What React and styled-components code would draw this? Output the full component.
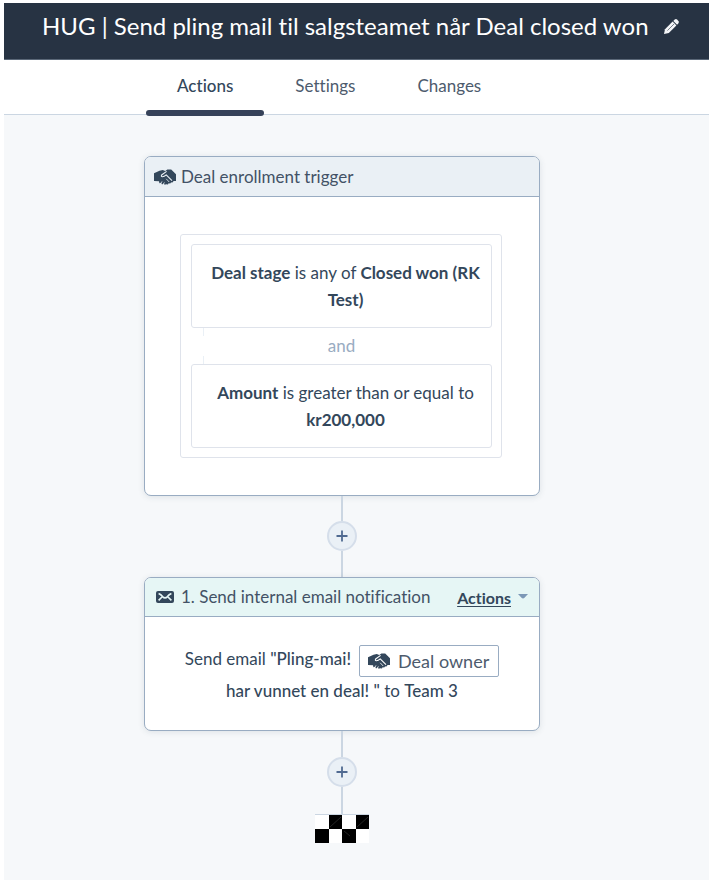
import React from "react";
import styled, { createGlobalStyle } from "styled-components";

const Global = createGlobalStyle`
  * { box-sizing: border-box; }
  body {
    margin: 0;
    background: #fff;
    color: #33475b;
    font-family: Lato, "Liberation Sans", sans-serif;
    font-size: 17px;
    font-variant-ligatures: none;
  }
  button { font: inherit; color: inherit; cursor: pointer; }
`;

const Page = styled.div`
  display: flex;
  flex-direction: column;
  min-height: 100vh;
  padding: 3px 1px 7px 4px;
`;

const Header = styled.header`
  display: flex;
  align-items: flex-start;
  gap: 15px;
  height: 57px;
  padding: 7px 24px 0 38px;
  background: #273343;
  border-bottom: 1px solid #5b6878;
`;

const Title = styled.h1`
  margin: 0;
  color: #fff;
  font-size: 24px;
  font-weight: 400;
  line-height: 32px;
  white-space: nowrap;
`;

const IconButton = styled.button`
  display: flex;
  align-items: center;
  height: 32px;
  padding: 0;
  border: 0;
  background: none;
`;

const Tabs = styled.nav`
  display: flex;
  height: 55px;
  padding-left: 142px;
  border-bottom: 1px solid #cbd6e2;
`;

const Tab = styled.button`
  position: relative;
  padding: 0 31px 4px;
  border: 0;
  background: none;
  color: ${(p) => (p.$active ? "#33475b" : "#4d5b6d")};
  font-weight: ${(p) => (p.$active ? 500 : 400)};

  &::after {
    content: "";
    display: ${(p) => (p.$active ? "block" : "none")};
    position: absolute;
    left: 0;
    right: 0;
    bottom: -2px;
    height: 6px;
    border-radius: 3px;
    background: #364259;
  }
`;

const Canvas = styled.main`
  display: flex;
  flex: 1;
  flex-direction: column;
  align-items: center;
  padding: 41px 29px 32px 0;
  background: #f6f8fa;
`;

const Card = styled.section`
  width: 100%;
  max-width: 396px;
  overflow: hidden;
  border: 1px solid #99acc2;
  border-radius: 7px;
  background: #fff;
  box-shadow: 0 1px 6px rgba(45, 62, 80, 0.12);
`;

const CardHeader = styled.header`
  display: flex;
  align-items: center;
  height: ${(p) => (p.$tone === "action" ? 39 : 40)}px;
  gap: 5px;
  padding: 0 11px 0 9px;
  border-bottom: 1px solid #99acc2;
  background: ${(p) => (p.$tone === "action" ? "#e6f6f5" : "#eaf0f5")};
`;

const IconSlot = styled.span`
  display: flex;
  justify-content: center;
  width: 22px;
`;

const CardTitle = styled.h2`
  flex: 1;
  margin: 0;
  padding-bottom: 1px;
  color: #435266;
  font-size: 17px;
  font-weight: 400;
  white-space: nowrap;
`;

const MenuButton = styled.button`
  display: flex;
  align-items: center;
  gap: 7px;
  padding: 0;
  border: 0;
  background: none;
  font-size: 16px;
  font-weight: 700;

  span {
    text-decoration: underline;
    text-underline-offset: 2px;
  }
`;

const TriggerBody = styled.div`
  padding: 37px 37px 37px 35px;
`;

const FilterGroup = styled.div`
  padding: 9px 9px 9px 10px;
  border: 1px solid #dfe3eb;
  border-radius: 3px;
`;

const Condition = styled.p`
  margin: 0;
  padding: 14px 8px 14px 16px;
  border: 1px solid #dfe3eb;
  border-radius: 3px;
  line-height: 27px;
  text-align: center;
`;

const Joiner = styled.div`
  display: flex;
  flex-direction: column;
  justify-content: space-between;
  height: 36px;
  color: #99acc2;
  line-height: 20px;
  text-align: center;

  &::before,
  &::after {
    content: "";
    width: 1px;
    height: 8px;
    margin-left: 12px;
    background: #eaf0f6;
  }
`;

const Line = styled.div`
  width: 2px;
  height: ${(p) => p.$length}px;
  background: #cbd6e2;
`;

const AddButton = styled.button`
  display: flex;
  align-items: center;
  justify-content: center;
  width: 30px;
  height: 30px;
  padding: 0;
  border: 2px solid #d5deea;
  border-radius: 50%;
  background: #eaf0f6;
`;

const ActionBody = styled.div`
  display: flex;
  flex-direction: column;
  align-items: center;
  padding: 28px 20px 26px;
  line-height: 27px;
`;

const MessageLine = styled.p`
  display: flex;
  align-items: flex-start;
  gap: 8px;
  margin: 0;
  white-space: nowrap;
`;

const Medium = styled.span`
  font-weight: 500;
`;

const Token = styled.span`
  display: flex;
  align-items: center;
  gap: 8px;
  height: 32px;
  padding: 0 9px 0 8px;
  border: 1px solid #99acc2;
  border-radius: 2px;
  color: #4d5b6d;
  font-size: 18px;
`;

function PencilIcon() {
  return (
    <svg width="15" height="15" viewBox="0 0 15 15" aria-hidden="true">
      <path d="M0 15 1 10.2 8.6 2.6 12.4 6.4 4.8 14Z" fill="#f3f5f7" />
      <path d="M9.3 1.9 10.7.6Q12-.4 13.1.6L14.4 1.9Q15.4 3 14.4 4.3L13.1 5.7Z" fill="#f3f5f7" />
      <path d="M3.4 11.6 10 5" stroke="#273343" strokeWidth=".6" />
    </svg>
  );
}

function HandshakeIcon({ gap = "#eaf0f5" }) {
  return (
    <svg width="22" height="16" viewBox="0 0 22 16" aria-hidden="true">
      <path
        d="M0 4.2 5.5 1.8 8.8 1 11.2 2 13.4.6 17.2.6 22 5.2V12L19.4 12 19 13.2 17 13.4 16.2 14.6 14.6 14.2 14 15.6 12.2 15.2 10.6 15.8 9.8 14.6 8 15.4 7.2 13.8 5.4 14.2 5 12.2 0 12Z"
        fill="#33475b"
      />
      <path
        d="M12.6 2.4 7.6 6Q6.8 7.6 8.4 7.8 10.2 7.6 12.2 5.8L18 11.6"
        fill="none"
        stroke={gap}
        strokeWidth="1.1"
        strokeLinejoin="round"
      />
      <path d="M6.8 14.4 8 12.4M9.2 15.6 10.4 13.4M12.2 9.8 15.2 13" stroke={gap} strokeWidth=".8" />
    </svg>
  );
}

function EnvelopeIcon() {
  return (
    <svg width="18" height="12" viewBox="0 0 18 12" aria-hidden="true">
      <rect width="18" height="12" rx="2" fill="#33475b" />
      <path
        d="M2.6 2.6Q5 3.6 6.6 5.6 9 8.2 11.4 5.6 13 3.6 15.4 2.6M2.6 9.4 6 6M15.4 9.4 12 6"
        fill="none"
        stroke="#e6f6f5"
        strokeWidth="1.6"
      />
    </svg>
  );
}

function CaretIcon() {
  return (
    <svg width="10" height="6" viewBox="0 0 10 6" aria-hidden="true">
      <path d="M0 0H10L6.5 3.8Q5 5.2 3.5 3.8Z" fill="#7c98b6" />
    </svg>
  );
}

function PlusIcon() {
  return (
    <svg width="12" height="12" viewBox="0 0 12 12" aria-hidden="true">
      <path d="M6 .5V11.5M.5 6H11.5" stroke="#506a91" strokeWidth="1.8" />
    </svg>
  );
}

function FinishFlag() {
  return (
    <svg width="54" height="29" viewBox="0 0 54 29" role="img" aria-label="End of workflow">
      <rect width="54" height="29" fill="#fff" />
      <path d="M0 .5H54" stroke="#cbd6e2" />
      <path d="M14 1H27V15H14ZM41 1H54V15H41ZM0 15H14V29H0ZM27 15H41V29H27Z" fill="#000" />
      <path d="M15 13 26 3M42 13 53 3M29 17 35 22" stroke="#333" strokeWidth=".7" />
    </svg>
  );
}

function Connector({ before, after }) {
  return (
    <>
      <Line $length={before} />
      <AddButton type="button" aria-label="Add action">
        <PlusIcon />
      </AddButton>
      <Line $length={after} />
    </>
  );
}

const tabs = ["Actions", "Settings", "Changes"];

export default function App() {
  const [active, setActive] = React.useState("Actions");
  return (
    <Page>
      <Global />
      <Header>
        <Title>HUG | Send pling mail til salgsteamet når Deal closed won</Title>
        <IconButton type="button" aria-label="Edit name">
          <PencilIcon />
        </IconButton>
      </Header>
      <Tabs>
        {tabs.map((name) => (
          <Tab key={name} type="button" $active={name === active} onClick={() => setActive(name)}>
            {name}
          </Tab>
        ))}
      </Tabs>
      <Canvas>
        <Card>
          <CardHeader>
            <IconSlot><HandshakeIcon /></IconSlot>
            <CardTitle>Deal enrollment trigger</CardTitle>
          </CardHeader>
          <TriggerBody>
            <FilterGroup>
              <Condition>
                <b>Deal stage</b> is any of <b>Closed won (RK<br />Test)</b>
              </Condition>
              <Joiner>and</Joiner>
              <Condition>
                <b>Amount</b> is greater than or equal to<br /><b>kr200,000</b>
              </Condition>
            </FilterGroup>
          </TriggerBody>
        </Card>
        <Connector before={25} after={26} />
        <Card>
          <CardHeader $tone="action">
            <IconSlot><EnvelopeIcon /></IconSlot>
            <CardTitle>1. Send internal email notification</CardTitle>
            <MenuButton type="button">
              <span>Actions</span>
              <CaretIcon />
            </MenuButton>
          </CardHeader>
          <ActionBody>
            <MessageLine>
              <span>Send email <Medium>"Pling-mai!</Medium></span>
              <Token><HandshakeIcon gap="#fff" />Deal owner</Token>
            </MessageLine>
            <MessageLine>
              <span><Medium>har vunnet en deal! "</Medium> to <Medium>Team 3</Medium></span>
            </MessageLine>
          </ActionBody>
        </Card>
        <Connector before={26} after={27} />
        <FinishFlag />
      </Canvas>
    </Page>
  );
}
